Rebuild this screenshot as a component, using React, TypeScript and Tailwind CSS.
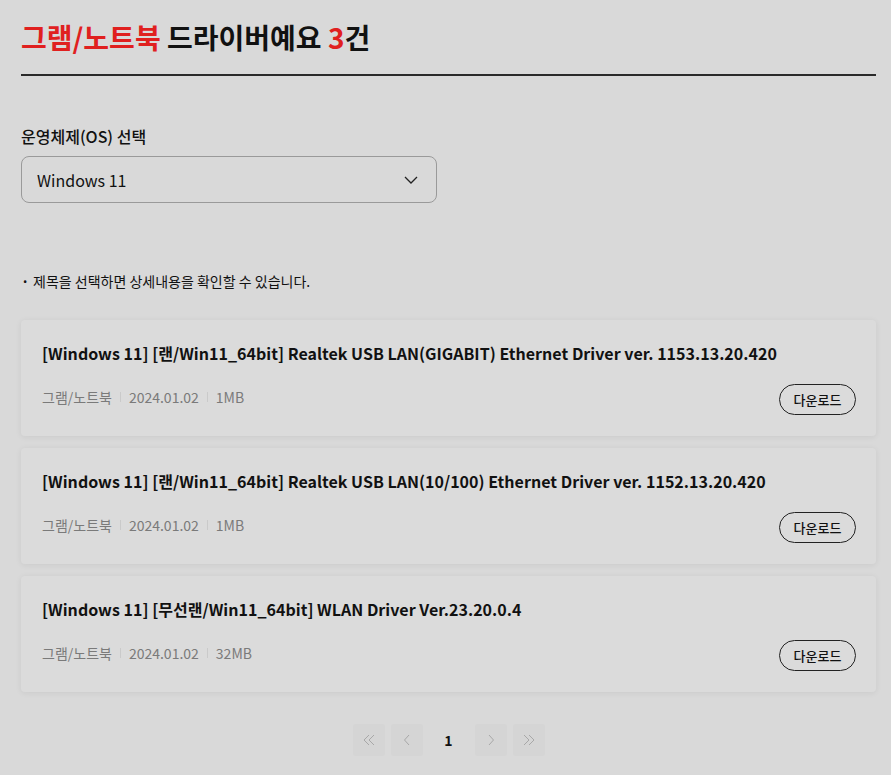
import React from "react";

const items = [
  { title: "[Windows 11] [랜/Win11_64bit] Realtek USB LAN(GIGABIT) Ethernet Driver ver. 1153.13.20.420", size: "1MB" },
  { title: "[Windows 11] [랜/Win11_64bit] Realtek USB LAN(10/100) Ethernet Driver ver. 1152.13.20.420", size: "1MB" },
  { title: "[Windows 11] [무선랜/Win11_64bit] WLAN Driver Ver.23.20.0.4", size: "32MB" },
];

export default function App() {
  return (
    <div
      className="min-h-[775px] bg-[#d9d9d9] text-[#111] pl-[21px] pr-[15px] pt-[18px]"
      style={{ fontFamily: '"Noto Sans CJK KR", "Noto Sans", sans-serif' }}
    >
      <h1 className="text-[28px] font-bold leading-[38px] pb-[18px] border-b-2 border-[#2a2a2a]">
        <span className="text-[#e0201f]">그램/노트북</span> 드라이버예요 <span className="text-[#e0201f]">3</span>건
      </h1>

      <div className="mt-[49px] text-[16px] font-medium leading-[22px]">운영체제(OS) 선택</div>
      <div className="mt-[9px] w-[416px] h-[47px] rounded-[8px] border border-[#9a9a9a] flex items-center justify-between pl-[15px] pr-[18px]">
        <span className="text-[16px]">Windows 11</span>
        <svg width="14" height="8" viewBox="0 0 14 8" fill="none">
          <path d="M1 1l6 6 6-6" stroke="#222" strokeWidth="1.3" />
        </svg>
      </div>

      <div className="mt-[68px] flex items-center text-[14px] leading-[20px]">
        <span className="w-[12px] text-[14px] font-bold">·</span>
        <span>제목을 선택하면 상세내용을 확인할 수 있습니다.</span>
      </div>

      <div className="mt-[29px] flex flex-col gap-[12px]">
        {items.map((it, i) => (
          <div
            key={i}
            className="h-[116px] bg-[#dbdbdb] rounded-[4px] shadow-[0_1px_6px_rgba(0,0,0,0.07)] pl-[21px] pr-[20px] pt-[21px] flex flex-col"
          >
            <div className="text-[16px] font-bold leading-[24px] tracking-[0.02px]">{it.title}</div>
            <div className="mt-[19px] flex items-start justify-between">
              <div className="flex items-center text-[14px] text-[#7a7a7a] leading-[20px] mt-[3px]">
                <span>그램/노트북</span>
                <span className="mx-[8px] w-px h-[10px] bg-[#cacaca]" />
                <span>2024.01.02</span>
                <span className="mx-[8px] w-px h-[10px] bg-[#cacaca]" />
                <span>{it.size}</span>
              </div>
              <button className="w-[77px] h-[31px] rounded-full border border-[#222] text-[13px] font-medium flex items-center justify-center">
                다운로드
              </button>
            </div>
          </div>
        ))}
      </div>

      <div className="mt-[32px] flex items-center justify-center gap-[6px]">
        <div className="w-[32px] h-[32px] rounded-[3px] bg-[#d5d5d5] flex items-center justify-center">
          <svg width="14" height="12" viewBox="0 0 14 12" fill="none">
            <path d="M7 1L2 6l5 5M12 1L7 6l5 5" stroke="#a8a8a8" strokeWidth="1" />
          </svg>
        </div>
        <div className="w-[32px] h-[32px] rounded-[3px] bg-[#d5d5d5] flex items-center justify-center">
          <svg width="8" height="12" viewBox="0 0 8 12" fill="none">
            <path d="M6 1L1.5 6 6 11" stroke="#a8a8a8" strokeWidth="1" />
          </svg>
        </div>
        <div className="w-[40px] h-[32px] flex items-center justify-center text-[14px] font-bold">1</div>
        <div className="w-[32px] h-[32px] rounded-[3px] bg-[#d5d5d5] flex items-center justify-center">
          <svg width="8" height="12" viewBox="0 0 8 12" fill="none">
            <path d="M2 1l4.5 5L2 11" stroke="#a8a8a8" strokeWidth="1" />
          </svg>
        </div>
        <div className="w-[32px] h-[32px] rounded-[3px] bg-[#d5d5d5] flex items-center justify-center">
          <svg width="14" height="12" viewBox="0 0 14 12" fill="none">
            <path d="M2 1l5 5-5 5M7 1l5 5-5 5" stroke="#a8a8a8" strokeWidth="1" />
          </svg>
        </div>
      </div>
    </div>
  );
}
